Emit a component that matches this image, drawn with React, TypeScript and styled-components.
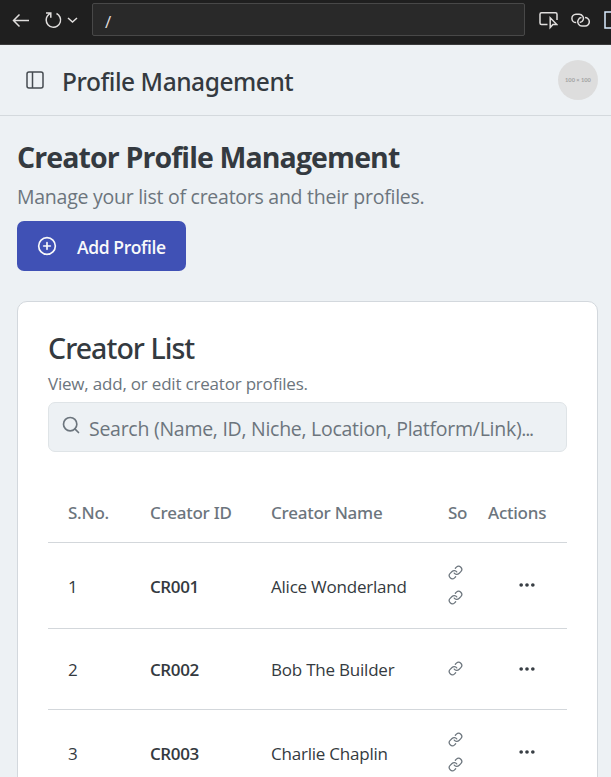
import React from "react";
import styled, { createGlobalStyle } from "styled-components";
import { Link, Ellipsis, Search, CirclePlus } from "lucide-react";

const GlobalStyle = createGlobalStyle`
  * { box-sizing: border-box; }
  html, body { margin: 0; height: 777px; overflow: hidden; background: #edf1f4; }
  body { font-family: "Open Sans", "Noto Sans", sans-serif; color: #343a40; }
  h1, h2, p { margin: 0; }
  svg { display: block; flex-shrink: 0; }
`;

const Page = styled.div`
  width: 611px;
  height: 777px;
  overflow: hidden;
  background: #edf1f4;
`;

const BrowserBar = styled.div`
  display: flex;
  align-items: flex-start;
  height: 45px;
  padding: 3px 0 0 12px;
  background: #1f1f1f;
  border-bottom: 1px solid #3b3b3b;
  color: #e0dedd;
  overflow: hidden;
`;

const BarIcon = styled.svg<{ $gap?: number }>`
  height: 33px;
  margin-right: ${(p) => p.$gap ?? 0}px;
  fill: none;
  stroke: currentColor;
  stroke-width: 1.5;
`;

const AddressField = styled.div`
  flex-shrink: 0;
  width: 433px;
  height: 33px;
  margin-right: 13px;
  padding-left: 12px;
  border: 1px solid #484848;
  border-radius: 2px;
  background: #292929;
  font-size: 17px;
  line-height: 36px;
`;

const AppHeader = styled.header`
  display: flex;
  align-items: center;
  height: 71px;
  padding: 0 13px 0 25px;
  border-bottom: 1px solid #d4d9dd;
`;

const SidebarIcon = styled.svg`
  margin-right: 17px;
  fill: none;
  stroke: #454b50;
  stroke-width: 1.5;
`;

const HeaderTitle = styled.div`
  flex: 1;
  padding-top: 4px;
  font-family: "Noto Sans", sans-serif;
  font-size: 24.5px;
  font-weight: 500;
  line-height: 34px;
  letter-spacing: -0.45px;
`;

const Avatar = styled.div`
  display: grid;
  place-items: center;
  width: 40px;
  height: 40px;
  border-radius: 50%;
  background: #dddddd;
  color: #a2a2a2;
  font: 700 5.7px/1 Lato, sans-serif;
`;

const Main = styled.main`
  padding: 22px 13px 0 17px;
`;

const PageTitle = styled.h1`
  font-size: 28.5px;
  font-weight: 700;
  line-height: 38px;
  letter-spacing: -0.89px;
  white-space: nowrap;
`;

const PageSubtitle = styled.p`
  margin-top: 6px;
  color: #6c757d;
  font-size: 19.5px;
  line-height: 30px;
  letter-spacing: -0.26px;
  white-space: nowrap;
`;

const PrimaryButton = styled.button`
  display: flex;
  align-items: center;
  width: 169px;
  height: 50px;
  margin-top: 9px;
  padding: 0 0 0 20px;
  gap: 20px;
  border: 0;
  border-radius: 7px;
  background: #4051b5;
  color: #f8f9fa;
  font: 600 17.5px/24px "Open Sans", sans-serif;
  letter-spacing: -0.4px;
  white-space: nowrap;

  span { padding-top: 2px; }
`;

const Card = styled.section`
  height: 520px;
  margin-top: 30px;
  padding: 28px 30px 0;
  border: 1px solid #d3d8dd;
  border-radius: 10px;
  background: #fff;
`;

const CardTitle = styled.h2`
  font-family: "Noto Sans", sans-serif;
  font-size: 28.5px;
  font-weight: 500;
  line-height: 36px;
  letter-spacing: -0.95px;
`;

const CardText = styled.p`
  margin-top: 5px;
  color: #6c757d;
  font-size: 17px;
  line-height: 26px;
  letter-spacing: -0.2px;
`;

const SearchField = styled.div`
  display: flex;
  height: 50px;
  margin-top: 5px;
  padding: 0 30px 0 12px;
  gap: 8px;
  border: 1px solid #dfe4e7;
  border-radius: 7px;
  background: #edf1f4;
  color: #6c757d;

  svg { margin-top: 12px; }
`;

const Placeholder = styled.span`
  padding-top: 1px;
  font-size: 19.5px;
  line-height: 50px;
  letter-spacing: -0.27px;
  white-space: nowrap;
`;

const Dots = styled.span`
  letter-spacing: -1.3px;
`;

const Table = styled.div`
  margin-top: 30px;
`;

const Row = styled.div<{ $height: number }>`
  display: grid;
  grid-template-columns: 102px 121px 177px 40px 79px;
  align-items: center;
  height: ${(p) => p.$height}px;
  border-bottom: 1px solid #d3d7db;
`;

const HeadCell = styled.div<{ $inset?: number }>`
  padding-top: 2px;
  padding-left: ${(p) => p.$inset ?? 0}px;
  color: #6c757d;
  font-family: "Noto Sans", sans-serif;
  font-size: 17px;
  font-weight: 500;
  line-height: 24px;
  letter-spacing: -0.25px;
  white-space: nowrap;
`;

const Cell = styled.div<{ $strong?: boolean; $inset?: number }>`
  padding-top: 2px;
  padding-left: ${(p) => p.$inset ?? 0}px;
  font-size: 17px;
  font-weight: ${(p) => (p.$strong ? 600 : 400)};
  line-height: 24px;
  letter-spacing: ${(p) => (p.$strong ? -0.4 : -0.22)}px;
  white-space: nowrap;
`;

const Links = styled.div`
  display: flex;
  flex-direction: column;
  gap: 10px;
  padding-bottom: 1px;
  color: #6c757d;
`;

const ActionCell = styled.div`
  padding: 0 0 1px 29px;
`;

const creators = [
  { id: "CR001", name: "Alice Wonderland", links: 2, height: 86 },
  { id: "CR002", name: "Bob The Builder", links: 1, height: 81 },
  { id: "CR003", name: "Charlie Chaplin", links: 2, height: 86 },
];

export default function App() {
  return (
    <Page>
      <GlobalStyle />
      <BrowserBar>
        <BarIcon $gap={15} width="18" viewBox="0 0 18 33">
          <path d="M17 17.5H1.5M7.5 11.5L1.5 17.5L7.5 23.5" />
        </BarIcon>
        <BarIcon $gap={5} width="17" viewBox="0 0 17 33">
          <path d="M1 10H5.8V14.7M5.8 10.2C3 11.7 1.2 14.3 1.2 17a7.2 7.2 0 1 0 10.3-6.5" />
        </BarIcon>
        <BarIcon $gap={14} width="11" viewBox="0 0 11 33">
          <path d="M1 15L5.5 19L10 15" />
        </BarIcon>
        <AddressField>/</AddressField>
        <BarIcon $gap={13} width="20" viewBox="0 0 20 33">
          <path d="M9.5 21.5H3.5a1.5 1.5 0 0 1-1.5-1.5V11.2a1.5 1.5 0 0 1 1.5-1.5h14a1.5 1.5 0 0 1 1.5 1.5V17M12.2 14.8V24.6l2.7-3H18.8Z" />
        </BarIcon>
        <BarIcon $gap={14} width="19" viewBox="0 0 19 33">
          <path d="M5.2 19.6A4.2 4.2 0 0 1 5 11.2H8.2a4.2 4.2 0 0 1 3.9 5.8c-.6 1.5-1.8 2.5-3.4 2.6M14 14.6a4.2 4.2 0 0 1 .2 8.4H11a4.2 4.2 0 0 1-3.9-5.8c.6-1.5 1.8-2.5 3.4-2.6" />
        </BarIcon>
        <BarIcon width="18" viewBox="0 0 18 33">
          <rect x="1" y="9" width="16" height="16" stroke="#d9ecff" />
        </BarIcon>
      </BrowserBar>
      <AppHeader>
        <SidebarIcon width="20" height="20" viewBox="0 0 20 20">
          <rect x="2" y="2" width="16" height="16" rx="2" />
          <path d="M7.5 2V18" />
        </SidebarIcon>
        <HeaderTitle>Profile Management</HeaderTitle>
        <Avatar>100 × 100</Avatar>
      </AppHeader>
      <Main>
        <PageTitle>Creator Profile Management</PageTitle>
        <PageSubtitle>Manage your list of creators and their profiles.</PageSubtitle>
        <PrimaryButton>
          <CirclePlus size={20} strokeWidth={2} />
          <span>Add Profile</span>
        </PrimaryButton>
        <Card>
          <CardTitle>Creator List</CardTitle>
          <CardText>View, add, or edit creator profiles.</CardText>
          <SearchField>
            <Search size={20} strokeWidth={2} />
            <Placeholder>
              Search (Name, ID, Niche, Location, Platform/Link)<Dots>...</Dots>
            </Placeholder>
          </SearchField>
          <Table>
            <Row $height={61}>
              <HeadCell $inset={20}>S.No.</HeadCell>
              <HeadCell>Creator ID</HeadCell>
              <HeadCell>Creator Name</HeadCell>
              <HeadCell>So</HeadCell>
              <HeadCell>Actions</HeadCell>
            </Row>
            {creators.map((c, i) => (
              <Row key={c.id} $height={c.height}>
                <Cell $inset={20}>{i + 1}</Cell>
                <Cell $strong>{c.id}</Cell>
                <Cell>{c.name}</Cell>
                <Links>
                  {Array.from({ length: c.links }, (_, n) => (
                    <Link key={n} size={15} strokeWidth={2} />
                  ))}
                </Links>
                <ActionCell>
                  <Ellipsis size={20} strokeWidth={2.4} />
                </ActionCell>
              </Row>
            ))}
          </Table>
        </Card>
      </Main>
    </Page>
  );
}
